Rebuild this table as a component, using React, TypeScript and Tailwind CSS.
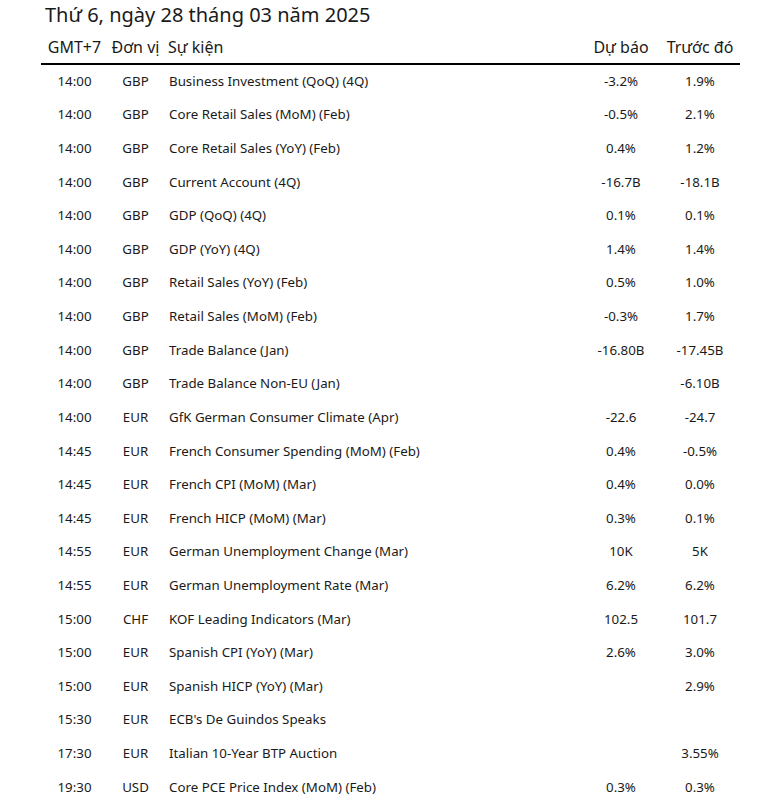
const rows: [string, string, string, string, string][] = [
  ['14:00', 'GBP', 'Business Investment (QoQ) (4Q)', '-3.2%', '1.9%'],
  ['14:00', 'GBP', 'Core Retail Sales (MoM) (Feb)', '-0.5%', '2.1%'],
  ['14:00', 'GBP', 'Core Retail Sales (YoY) (Feb)', '0.4%', '1.2%'],
  ['14:00', 'GBP', 'Current Account (4Q)', '-16.7B', '-18.1B'],
  ['14:00', 'GBP', 'GDP (QoQ) (4Q)', '0.1%', '0.1%'],
  ['14:00', 'GBP', 'GDP (YoY) (4Q)', '1.4%', '1.4%'],
  ['14:00', 'GBP', 'Retail Sales (YoY) (Feb)', '0.5%', '1.0%'],
  ['14:00', 'GBP', 'Retail Sales (MoM) (Feb)', '-0.3%', '1.7%'],
  ['14:00', 'GBP', 'Trade Balance (Jan)', '-16.80B', '-17.45B'],
  ['14:00', 'GBP', 'Trade Balance Non-EU (Jan)', '', '-6.10B'],
  ['14:00', 'EUR', 'GfK German Consumer Climate (Apr)', '-22.6', '-24.7'],
  ['14:45', 'EUR', 'French Consumer Spending (MoM) (Feb)', '0.4%', '-0.5%'],
  ['14:45', 'EUR', 'French CPI (MoM) (Mar)', '0.4%', '0.0%'],
  ['14:45', 'EUR', 'French HICP (MoM) (Mar)', '0.3%', '0.1%'],
  ['14:55', 'EUR', 'German Unemployment Change (Mar)', '10K', '5K'],
  ['14:55', 'EUR', 'German Unemployment Rate (Mar)', '6.2%', '6.2%'],
  ['15:00', 'CHF', 'KOF Leading Indicators (Mar)', '102.5', '101.7'],
  ['15:00', 'EUR', 'Spanish CPI (YoY) (Mar)', '2.6%', '3.0%'],
  ['15:00', 'EUR', 'Spanish HICP (YoY) (Mar)', '', '2.9%'],
  ['15:30', 'EUR', "ECB's De Guindos Speaks", '', ''],
  ['17:30', 'EUR', 'Italian 10-Year BTP Auction', '', '3.55%'],
  ['19:30', 'USD', 'Core PCE Price Index (MoM) (Feb)', '0.3%', '0.3%'],
]

export default function App() {
  return (
    <div
      className="w-[783px] h-[802px] overflow-hidden bg-white text-[#1a1a1a]"
      style={{ fontFamily: '"Noto Sans", "Open Sans", sans-serif' }}
    >
      {/* Tiêu đề ngày */}
      <h2 className="pl-[45px] text-[20px] leading-[30px] font-normal">
        Thứ 6, ngày 28 tháng 03 năm 2025
      </h2>

      <div className="ml-[41px] w-[699px]">
        {/* Header */}
        <div className="flex items-center h-[35px] border-b-2 border-black text-[16px]">
          <div className="w-[67px] text-center">GMT+7</div>
          <div className="w-[55px] text-center">Đơn vị</div>
          <div className="flex-1 pl-[5px]">Sự kiện</div>
          <div className="w-[78px] text-center">Dự báo</div>
          <div className="w-[80px] text-center">Trước đó</div>
        </div>

        {/* Danh sách sự kiện */}
        {rows.map(([time, unit, event, forecast, prev], i) => (
          <div key={i} className="flex items-center h-[33.62px] text-[13.3px]">
            <div className="w-[67px] text-center">{time}</div>
            <div className="w-[55px] text-center">{unit}</div>
            <div className="flex-1 pl-[6px]">{event}</div>
            <div className="w-[78px] text-center">{forecast}</div>
            <div className="w-[80px] text-center">{prev}</div>
          </div>
        ))}
      </div>
    </div>
  )
}
